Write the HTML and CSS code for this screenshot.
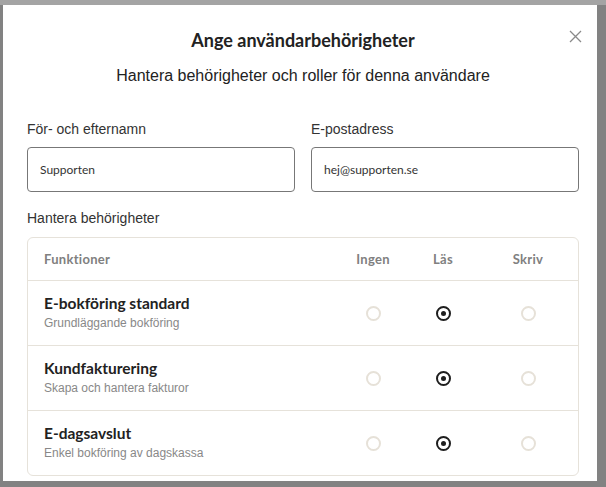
FILE: index.html
```html
<!DOCTYPE html>
<html lang="sv">
<head>
  <meta charset="UTF-8" />
  <title>Ange användarbehörigheter</title>
  <link rel="stylesheet" href="styles.css">
</head>
<body>

<div class="modal">
  <button class="close" aria-label="Stäng">
    <svg width="13" height="13" viewBox="0 0 13 13"><path d="M1 1L12 12M12 1L1 12" stroke="#8a8a8a" stroke-width="1.3" fill="none"/></svg>
  </button>

  <div class="modal-head">
    <h2 class="title">Ange användarbehörigheter</h2>
    <p class="subtitle">Hantera behörigheter och roller för denna användare</p>
  </div>

  <div class="fields">
    <label class="field">
      <span class="label">För- och efternamn</span>
      <span class="input">Supporten</span>
    </label>
    <label class="field">
      <span class="label">E-postadress</span>
      <span class="input">hej@supporten.se</span>
    </label>
  </div>

  <div class="label perm-label">Hantera behörigheter</div>

  <div class="perms">
    <div class="perm-row perm-head">
      <div>Funktioner</div>
      <div class="col">Ingen</div>
      <div class="col">Läs</div>
      <div class="col">Skriv</div>
    </div>

    <div class="perm-row">
      <div>
        <div class="perm-name">E-bokföring standard</div>
        <div class="perm-desc">Grundläggande bokföring</div>
      </div>
      <div class="col"><span class="radio"></span></div>
      <div class="col"><span class="radio on"></span></div>
      <div class="col"><span class="radio"></span></div>
    </div>

    <div class="perm-row">
      <div>
        <div class="perm-name">Kundfakturering</div>
        <div class="perm-desc">Skapa och hantera fakturor</div>
      </div>
      <div class="col"><span class="radio"></span></div>
      <div class="col"><span class="radio on"></span></div>
      <div class="col"><span class="radio"></span></div>
    </div>

    <div class="perm-row">
      <div>
        <div class="perm-name">E-dagsavslut</div>
        <div class="perm-desc">Enkel bokföring av dagskassa</div>
      </div>
      <div class="col"><span class="radio"></span></div>
      <div class="col"><span class="radio on"></span></div>
      <div class="col"><span class="radio"></span></div>
    </div>
  </div>
</div>

</body>
</html>
```

FILE: styles.css
```css
html, body {
  margin: 0;
  padding: 0;
  overflow: hidden;
}

body {
  background: #828282;
  border-top: 5px solid #a4a4a4;
  padding-left: 3px;
  font-family: "Liberation Sans", Arial, sans-serif;
  color: #222;
}

.modal {
  position: relative;
  width: 594px;
  height: 476px;
  box-sizing: border-box;
  padding: 24px 18px 0 24px;
  background: #fff;
  overflow: hidden;
}

.close {
  position: absolute;
  top: 25px;
  left: 566px;
  padding: 0;
  border: 0;
  background: none;
  line-height: 0;
}

.modal-head {
  text-align: center;
}

.title {
  margin: 0;
  font-family: Lato, sans-serif;
  font-weight: 700;
  font-size: 18px;
  line-height: 22px;
  color: #222;
}

.subtitle {
  margin: 14px 0 0;
  font-size: 16px;
  line-height: 22px;
  color: #222;
}

.fields {
  display: grid;
  grid-template-columns: 1fr 1fr;
  gap: 16px;
  margin-top: 33px;
}

.field {
  display: flex;
  flex-direction: column;
  gap: 9px;
}

.label {
  font-size: 14px;
  line-height: 18px;
  color: #333;
}

.input {
  height: 45px;
  box-sizing: border-box;
  padding: 0 12px;
  display: flex;
  align-items: center;
  border: 1px solid #777;
  border-radius: 4px;
  font-family: Lato, sans-serif;
  font-size: 12px;
  color: #333;
}

.perm-label {
  margin-top: 17px;
}

.perms {
  margin-top: 10px;
  border: 1px solid #e6e2da;
  border-radius: 6px;
}

/* name column, then Ingen / Läs / Skriv */
.perm-row {
  display: grid;
  grid-template-columns: 1fr 70px 70px 100px;
  align-items: center;
  height: 64px;
  padding-left: 16px;
  border-top: 1px solid #e6e2da;
}

.perm-head {
  height: 42px;
  border-top: 0;
  font-family: Lato, sans-serif;
  font-weight: 700;
  font-size: 13px;
  letter-spacing: 0.3px;
  color: #808080;
}

.col {
  display: flex;
  justify-content: center;
}

.perm-name {
  font-family: Lato, sans-serif;
  font-weight: 700;
  font-size: 15.5px;
  line-height: 18px;
  color: #222;
}

.perm-desc {
  margin-top: 2px;
  font-size: 12px;
  line-height: 18px;
  color: #888;
}

.radio {
  width: 15px;
  height: 15px;
  box-sizing: border-box;
  border: 2px solid #e6e1d8;
  border-radius: 50%;
  display: flex;
  align-items: center;
  justify-content: center;
}

.radio.on {
  border-color: #1e1e1e;
}

.radio.on::after {
  content: "";
  width: 5px;
  height: 5px;
  border-radius: 50%;
  background: #1e1e1e;
}
```
